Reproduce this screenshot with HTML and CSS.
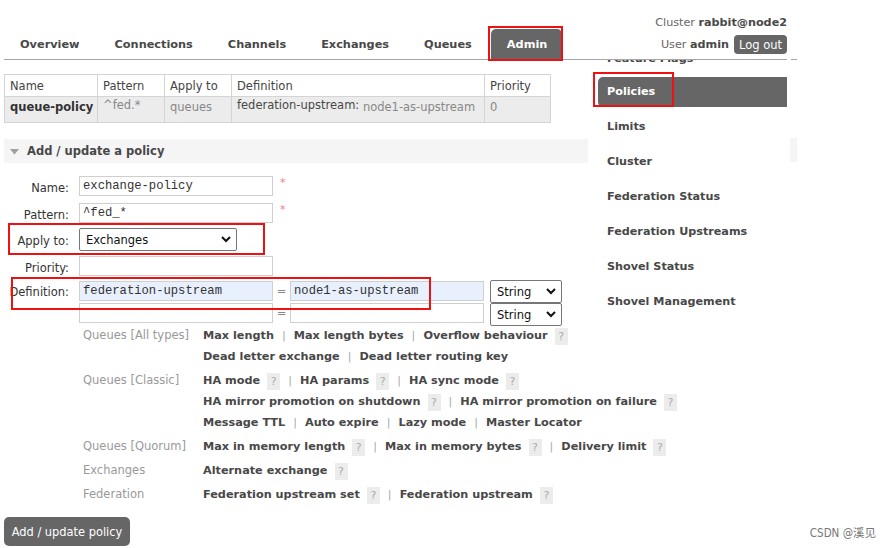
FILE: index.html
```html
<!DOCTYPE html>
<html>
<head>
<meta charset="utf-8">
<link rel="stylesheet" href="styles.css">
</head>
<body>
<div class="page">
  <header class="top">
    <nav class="tabs">
      <span class="tab">Overview</span>
      <span class="tab">Connections</span>
      <span class="tab">Channels</span>
      <span class="tab">Exchanges</span>
      <span class="tab">Queues</span>
      <span class="tab active">Admin</span>
    </nav>
    <div class="user">
      <div class="cluster">Cluster <b>rabbit@node2</b></div>
      <div class="login">User <b>admin</b><span class="logout">Log out</span></div>
    </div>
  </header>

  <div class="body">
    <main class="main">
      <table class="list">
        <colgroup>
          <col class="c1"><col class="c2"><col class="c3"><col class="c4"><col class="c5">
        </colgroup>
        <thead>
          <tr><th>Name</th><th>Pattern</th><th>Apply to</th><th>Definition</th><th>Priority</th></tr>
        </thead>
        <tbody>
          <tr>
            <td class="pname">queue-policy</td>
            <td class="muted raised">^fed.*</td>
            <td class="muted">queues</td>
            <td><span class="dkey">federation-upstream:</span> <span class="dval">node1-as-upstream</span></td>
            <td class="muted">0</td>
          </tr>
        </tbody>
      </table>

      <div class="section-h">
        <svg class="tri" width="9" height="6" viewBox="0 0 9 6"><polygon points="0,0 9,0 4.5,5.5" fill="#a0a0a0"/></svg>
        <span>Add / update a policy</span>
      </div>

      <div class="form">
        <div class="frow r1">
          <label class="flabel">Name:</label>
          <div class="inp">exchange-policy</div>
          <span class="req">*</span>
        </div>
        <div class="frow r2">
          <label class="flabel">Pattern:</label>
          <div class="inp">^fed_*</div>
          <span class="req">*</span>
        </div>
        <div class="frow r3">
          <label class="flabel">Apply to:</label>
          <div class="sel wide"><span>Exchanges</span><svg width="10" height="7" viewBox="0 0 10 7"><polyline points="1,1 5,5 9,1" fill="none" stroke="#111" stroke-width="2"/></svg></div>
        </div>
        <div class="frow r4">
          <label class="flabel">Priority:</label>
          <div class="inp"></div>
        </div>
        <div class="frow r5">
          <label class="flabel">Definition:</label>
          <div class="inp filled">federation-upstream</div>
          <span class="eq">=</span>
          <div class="inp filled">node1-as-upstream</div>
          <div class="sel small"><span>String</span><svg width="10" height="7" viewBox="0 0 10 7"><polyline points="1,1 5,5 9,1" fill="none" stroke="#111" stroke-width="2"/></svg></div>
        </div>
        <div class="frow r6">
          <label class="flabel"></label>
          <div class="inp"></div>
          <span class="eq">=</span>
          <div class="inp"></div>
          <div class="sel small"><span>String</span><svg width="10" height="7" viewBox="0 0 10 7"><polyline points="1,1 5,5 9,1" fill="none" stroke="#111" stroke-width="2"/></svg></div>
        </div>
      </div>

      <div class="help">
        <div class="hgroup">
          <div class="hlabel">Queues [All types]</div>
          <div class="hitems">
            <div class="hline">Max length<span class="sep">|</span>Max length bytes<span class="sep">|</span>Overflow behaviour<span class="q">?</span></div>
            <div class="hline">Dead letter exchange<span class="sep">|</span>Dead letter routing key</div>
          </div>
        </div>
        <div class="hgroup">
          <div class="hlabel">Queues [Classic]</div>
          <div class="hitems">
            <div class="hline">HA mode<span class="q">?</span><span class="sep">|</span>HA params<span class="q">?</span><span class="sep">|</span>HA sync mode<span class="q">?</span></div>
            <div class="hline">HA mirror promotion on shutdown<span class="q">?</span><span class="sep">|</span>HA mirror promotion on failure<span class="q">?</span></div>
            <div class="hline">Message TTL<span class="sep">|</span>Auto expire<span class="sep">|</span>Lazy mode<span class="sep">|</span>Master Locator</div>
          </div>
        </div>
        <div class="hgroup">
          <div class="hlabel">Queues [Quorum]</div>
          <div class="hitems">
            <div class="hline">Max in memory length<span class="q">?</span><span class="sep">|</span>Max in memory bytes<span class="q">?</span><span class="sep">|</span>Delivery limit<span class="q">?</span></div>
          </div>
        </div>
        <div class="hgroup">
          <div class="hlabel">Exchanges</div>
          <div class="hitems">
            <div class="hline">Alternate exchange<span class="q">?</span></div>
          </div>
        </div>
        <div class="hgroup">
          <div class="hlabel">Federation</div>
          <div class="hitems">
            <div class="hline">Federation upstream set<span class="q">?</span><span class="sep">|</span>Federation upstream<span class="q">?</span></div>
          </div>
        </div>
      </div>
    </main>

    <aside class="side">
      <ul class="menu">
        <li class="clipped">Feature Flags</li>
        <li class="active">Policies</li>
        <li>Limits</li>
        <li>Cluster</li>
        <li>Federation Status</li>
        <li>Federation Upstreams</li>
        <li>Shovel Status</li>
        <li>Shovel Management</li>
      </ul>
    </aside>

    <div class="edge"><div class="edge-bar"></div></div>
  </div>

  <footer class="foot">
    <span class="btn">Add / update policy</span>
    <span class="mark">CSDN @溪见</span>
  </footer>

  <div class="mark-box box-admin"></div>
  <div class="mark-box box-policies"></div>
  <div class="mark-box box-apply"></div>
  <div class="mark-box box-def"></div>
</div>
</body>
</html>
```

FILE: styles.css
```css
* { box-sizing: border-box; }

html, body {
  margin: 0;
  padding: 0;
  background: #fff;
}

body {
  width: 891px;
  height: 548px;
  overflow: hidden;
  font-family: "DejaVu Sans", Verdana, sans-serif;
  color: #484848;
}

.page {
  position: relative;
  padding-left: 4px;
  height: 548px;
}

/* header */
.top {
  position: relative;
  display: flex;
  justify-content: space-between;
  width: 783px;
  height: 60px;
  border-bottom: 1px solid #a6a6a6;
}

.top::after {
  content: "";
  position: absolute;
  left: 787px;
  bottom: -1px;
  width: 6px;
  height: 1px;
  background: #a6a6a6;
}

.tabs {
  display: flex;
  align-self: flex-end;
  gap: 3px;
}

.tab {
  height: 30px;
  line-height: 31px;
  padding: 0 16px;
  font-size: 11.3px;
  font-weight: bold;
  color: #484848;
  border-radius: 5px 5px 0 0;
}

.tab.active {
  background: #666;
  color: #fff;
  padding: 0 15px 0 16px;
}

.user {
  text-align: right;
  font-size: 11.2px;
  color: #666;
  padding-top: 16px;
}

.user b { color: #484848; }

.cluster {
  line-height: 14px;
  height: 14px;
}

.login {
  margin-top: 5px;
  height: 19px;
  line-height: 19px;
}

.logout {
  display: inline-block;
  margin-left: 5px;
  height: 19px;
  line-height: 19px;
  padding: 0 5px;
  background: #666;
  color: #fff;
  border-radius: 4px;
  font-family: "DejaVu Sans Condensed", "DejaVu Sans", sans-serif;
  font-size: 12.8px;
  vertical-align: top;
}

/* body layout */
.body {
  display: flex;
  align-items: flex-start;
}

.main {
  width: 584px;
  flex: none;
}

/* policy list table */
.list {
  margin-top: 14px;
  width: 546px;
  border-collapse: collapse;
  font-size: 11.5px;
  table-layout: fixed;
}

.c1 { width: 93px; }
.c2 { width: 67px; }
.c3 { width: 67px; }
.c4 { width: 253px; }
.c5 { width: 66px; }

.list th {
  height: 22px;
  padding: 0 5px;
  text-align: left;
  font-weight: normal;
  color: #444;
  background: #fff;
  border: 1px solid #d4d4d4;
}

.list td {
  height: 26px;
  padding: 3px 5px 0;
  vertical-align: top;
  background: #ececec;
  border: 1px solid #d4d4d4;
  white-space: nowrap;
}

.list td.pname {
  font-weight: bold;
  color: #333;
}

.list td.muted { color: #888; }
.list td.raised { padding-top: 1px; }

.dkey {
  position: relative;
  top: -2px;
  color: #484848;
}

.dval {
  color: #888;
  font-size: 11.5px;
}

/* section header */
.section-h {
  margin-top: 16px;
  height: 24px;
  display: flex;
  align-items: center;
  padding-left: 6px;
  background: #f5f5f5;
  font-size: 11.5px;
  font-weight: bold;
  color: #484848;
}

.tri { margin-right: 8px; margin-top: 1px; }

/* form */
.form { padding-top: 13px; }

.frow {
  display: flex;
  align-items: flex-start;
}

.r1 { height: 20px; }
.r2 { height: 20px; margin-top: 7px; }
.r3 { height: 23px; margin-top: 5px; }
.r4 { height: 20px; margin-top: 5px; }
.r5 { height: 23px; margin-top: 4px; }
.r6 { height: 22px; }

.flabel {
  width: 65px;
  flex: none;
  margin-right: 10px;
  text-align: right;
  font-size: 11.5px;
  color: #333;
  line-height: 20px;
  padding-top: 2px;
}

.r3 .flabel { padding-top: 3px; }

.inp {
  width: 194px;
  height: 20px;
  flex: none;
  border: 1px solid #cfcfcf;
  background: #fff;
  padding: 0 3px;
  font-family: "Liberation Mono", "Courier New", monospace;
  font-size: 12.2px;
  line-height: 18px;
  color: #333;
  white-space: nowrap;
}

.r5 .inp { margin-top: 1px; }

.inp.filled { background: #e8f0fe; }

.req {
  margin-left: 7px;
  color: #f08080;
  font-size: 11px;
  line-height: 14px;
}

.eq {
  width: 17px;
  flex: none;
  text-align: center;
  color: #888;
  font-size: 11.5px;
  line-height: 20px;
}

.r5 .eq { margin-top: 1px; }

.sel {
  height: 23px;
  flex: none;
  display: flex;
  align-items: center;
  justify-content: space-between;
  border: 1px solid #767676;
  border-radius: 2px;
  background: #fff;
  padding: 0 5px 0 6px;
  font-size: 11.5px;
  color: #111;
}

.sel.wide { width: 158px; }
.sel.small { width: 72px; margin-left: 6px; }

/* help */
.help {
  margin-left: 79px;
  display: flex;
  flex-direction: column;
  gap: 3px;
}

.hgroup { display: flex; }

.hlabel {
  width: 120px;
  flex: none;
  font-size: 11.5px;
  line-height: 21px;
  color: #999;
}

.hline {
  height: 21px;
  line-height: 21px;
  font-size: 11.25px;
  font-weight: bold;
  color: #484848;
  white-space: nowrap;
}

.sep {
  margin: 0 8px;
  font-weight: normal;
  color: #aaa;
}

.q {
  display: inline-block;
  width: 13px;
  height: 17px;
  line-height: 17px;
  margin-left: 7px;
  text-align: center;
  vertical-align: middle;
  background: #ececec;
  color: #aaa;
  font-weight: normal;
  font-size: 11px;
}

/* sidebar */
.side {
  width: 189px;
  margin-left: 10px;
  flex: none;
  height: 270px;
  overflow: hidden;
}

.menu {
  list-style: none;
  margin: -18px 0 0;
  padding: 0;
}

.menu li {
  height: 30px;
  line-height: 30px;
  margin-bottom: 5px;
  padding-left: 9px;
  font-size: 11.2px;
  font-weight: bold;
  color: #484848;
  border-radius: 5px 0 0 5px;
}

.menu li.clipped { line-height: 33px; }

.menu li.active {
  background: #666;
  color: #fff;
}

.edge {
  width: 7px;
  margin-left: 3px;
  flex: none;
}

.edge-bar {
  margin-top: 78px;
  height: 24px;
  background: #f5f5f5;
}

/* footer */
.foot {
  position: absolute;
  left: 4px;
  top: 517px;
  width: 872px;
  display: flex;
  justify-content: space-between;
  align-items: center;
}

.btn {
  display: inline-block;
  width: 126px;
  height: 29px;
  line-height: 29px;
  text-align: center;
  background: #666;
  color: #fff;
  border-radius: 5px;
  font-family: "DejaVu Sans Condensed", "DejaVu Sans", sans-serif;
  font-size: 12.7px;
}

.mark {
  font-family: "DejaVu Sans Condensed", "Noto Sans CJK SC", sans-serif;
  font-size: 11.5px;
  color: #777;
  margin-top: 1px;
}

/* red annotation boxes */
.mark-box {
  position: absolute;
  border: 2px solid #ee1111;
}

.box-admin { left: 488px; top: 26px; width: 75px; height: 35px; }
.box-policies { left: 593px; top: 72px; width: 81px; height: 35px; }
.box-apply { left: 8px; top: 223px; width: 257px; height: 32px; }
.box-def { left: 11px; top: 277px; width: 420px; height: 33px; }
```
